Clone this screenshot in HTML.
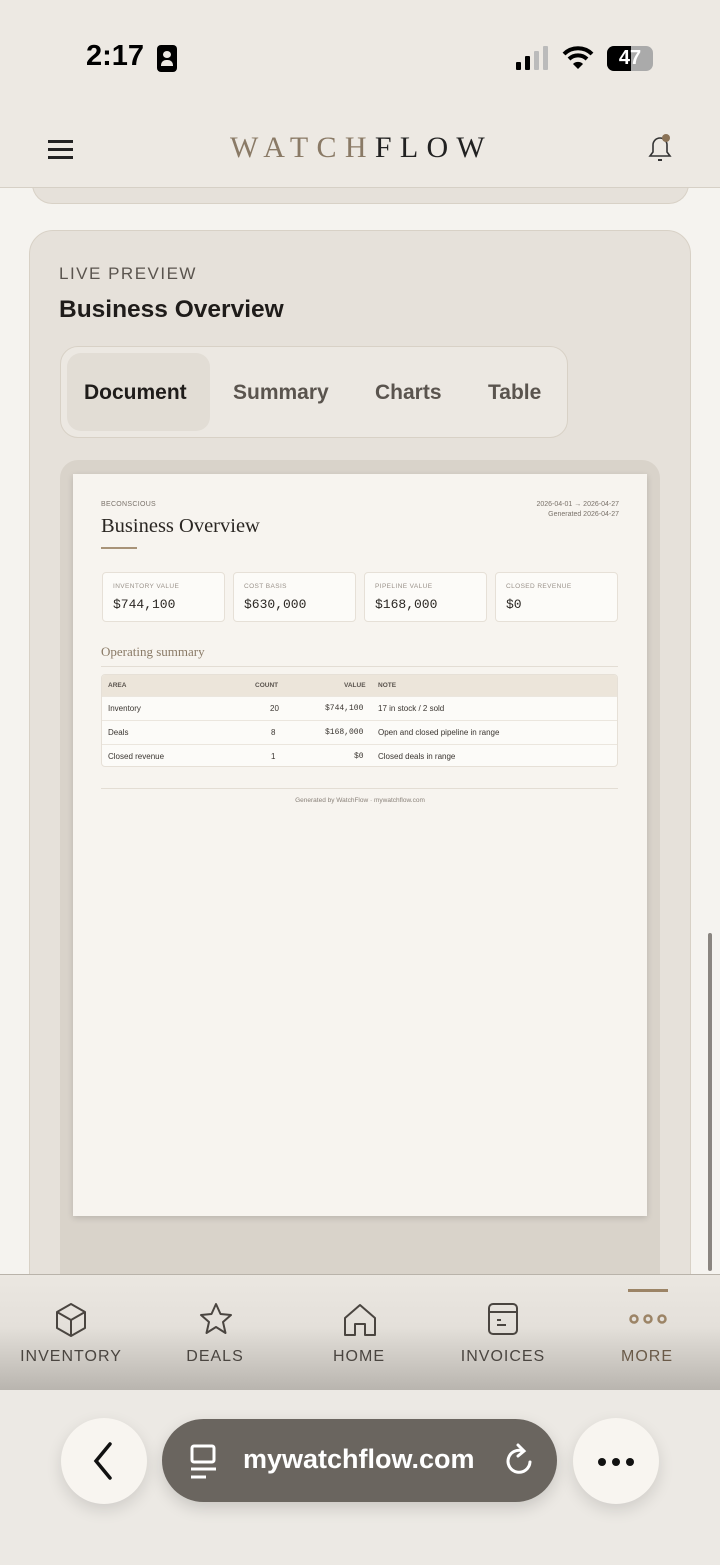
<!DOCTYPE html>
<html><head><meta charset="utf-8"><style>
*{box-sizing:border-box;margin:0;padding:0}
body{width:720px;height:1565px;overflow:hidden;background:#f5f3ef;font-family:"Liberation Sans",sans-serif;position:relative}
.abs{position:absolute}
.serif{font-family:"Liberation Serif",serif}
.mono{font-family:"Liberation Mono",monospace}
.kpi{position:absolute;top:572px;width:123px;height:50px;background:#fcfbf8;border:1px solid #e6e0d7;border-radius:4px}
.kpi .l{position:absolute;left:10px;top:10px;font-size:6.5px;color:#9a928a;letter-spacing:.4px}
.kpi .v{position:absolute;left:10px;top:24px;font-size:13px;color:#2a2622}
.row{position:absolute;left:0;width:515px;height:24px;border-top:1px solid #ebe6de;font-size:8px;color:#3a3530}
.row span{position:absolute;top:7px}
.nav{position:absolute;top:1348px;font-size:16px;color:#4a4540;letter-spacing:1px;text-align:center;width:120px}
</style></head><body>
<!-- top -->
<div class="abs" style="left:0;top:0;width:720px;height:188px;background:#ede9e3;border-bottom:1px solid #d6d0c6"></div>
<div class="abs" style="left:86px;top:40px;font-size:29px;font-weight:bold;color:#000">2:17</div>
<div class="abs" style="left:157px;top:45px;width:20px;height:27px;background:#000;border-radius:4px"><div style="position:absolute;left:6px;top:6px;width:8px;height:7px;background:#ede9e3;border-radius:50%"></div><div style="position:absolute;left:4px;top:15px;width:12px;height:6px;background:#ede9e3;border-radius:5px 5px 0 0"></div></div>
<div class="abs" style="left:516px;top:62px;width:5px;height:8px;background:#000;border-radius:1px"></div>
<div class="abs" style="left:525px;top:56px;width:5px;height:14px;background:#000;border-radius:1px"></div>
<div class="abs" style="left:534px;top:51px;width:5px;height:19px;background:#bbb;border-radius:1px"></div>
<div class="abs" style="left:543px;top:46px;width:5px;height:24px;background:#bbb;border-radius:1px"></div>
<svg class="abs" style="left:562px;top:45px" width="32" height="26" viewBox="0 0 32 26"><path d="M2 9a20 20 0 0 1 28 0" stroke="#000" stroke-width="4" fill="none"/><path d="M7 14a13 13 0 0 1 18 0" stroke="#000" stroke-width="4" fill="none"/><path d="M11 19l5 5 5-5a7 7 0 0 0-10 0z" fill="#000"/></svg>
<div class="abs" style="left:607px;top:46px;width:46px;height:25px;border-radius:7px;background:#aaa;overflow:hidden"><div style="width:24px;height:25px;background:#000"></div></div>
<div class="abs" style="left:607px;top:46px;width:46px;height:25px;text-align:center;font-size:20px;font-weight:bold;color:#fff;line-height:25px">47</div>
<div class="abs" style="left:48px;top:140px;width:25px;height:3px;background:#222;box-shadow:0 8px 0 #222,0 16px 0 #222"></div>
<div class="abs serif" style="left:230px;top:131px;font-size:30px;letter-spacing:8.3px;color:#8a7a66">WATCH<span style="color:#222">FLOW</span></div>
<svg class="abs" style="left:644px;top:132px" width="32" height="32" viewBox="0 0 32 32"><path d="M6 24h20l-3-4v-7a7 7 0 0 0-14 0v7z" stroke="#333" stroke-width="1.6" fill="none"/><path d="M14 28h4" stroke="#333" stroke-width="2"/><circle cx="22" cy="6" r="4" fill="#8a7256"/></svg>
<!-- prev card bottom -->
<div class="abs" style="left:32px;top:150px;width:657px;height:54px;background:#e6e1da;border:1px solid #d8d1c6;border-top:none;border-radius:0 0 20px 20px;z-index:-1"></div>
<!-- main card -->
<div class="abs" style="left:29px;top:230px;width:662px;height:1100px;background:#e6e1da;border:1.5px solid #d8d1c6;border-radius:24px"></div>
<div class="abs" style="left:59px;top:264px;font-size:17px;letter-spacing:1.5px;color:#5a544e">LIVE PREVIEW</div>
<div class="abs" style="left:59px;top:296px;font-size:24.5px;font-weight:bold;color:#1f1c1a">Business Overview</div>
<div class="abs" style="left:60px;top:346px;width:508px;height:92px;background:#ece8e2;border:1.5px solid #d8d1c6;border-radius:18px"></div>
<div class="abs" style="left:67px;top:353px;width:143px;height:78px;background:#e2ddd5;border-radius:14px"></div>
<div class="abs" style="left:84px;top:381px;font-size:21px;font-weight:bold;color:#1f1c1a">Document</div>
<div class="abs" style="left:233px;top:381px;font-size:21px;font-weight:bold;color:#5a544e">Summary</div>
<div class="abs" style="left:375px;top:381px;font-size:21px;font-weight:bold;color:#5a544e">Charts</div>
<div class="abs" style="left:488px;top:381px;font-size:21px;font-weight:bold;color:#5a544e">Table</div>
<!-- doc frame -->
<div class="abs" style="left:60px;top:460px;width:600px;height:830px;background:#d9d3ca;border-radius:18px 18px 0 0"></div>
<div class="abs" style="left:73px;top:474px;width:574px;height:742px;background:#f7f4ef;box-shadow:0 2px 6px rgba(0,0,0,.15)">
 <div class="abs" style="left:28px;top:27px;font-size:7px;color:#7a726a;letter-spacing:.3px">BECONSCIOUS</div>
 <div class="abs" style="right:28px;top:26px;font-size:7px;color:#7a726a;text-align:right;line-height:10px">2026-04-01 → 2026-04-27<br>Generated 2026-04-27</div>
 <div class="abs serif" style="left:28px;top:41px;font-size:20.5px;color:#2a2622">Business Overview</div>
 <div class="abs" style="left:28px;top:73px;width:36px;height:1.5px;background:#a89378"></div>
 <div class="abs serif" style="left:28px;top:170px;font-size:13px;color:#8a7a66">Operating summary</div>
 <div class="abs" style="left:28px;top:192px;width:517px;height:1px;background:#e3ddd4"></div>
 <div class="abs" style="left:28px;top:200px;width:517px;height:93px;background:#fcfbf8;border:1px solid #e6e0d7;border-radius:4px;overflow:hidden">
  <div style="position:absolute;left:0;top:0;width:517px;height:21px;background:#ece5da;font-size:6.5px;font-weight:bold;color:#5a544e">
   <span style="position:absolute;left:6px;top:7px">AREA</span><span style="position:absolute;left:153px;top:7px">COUNT</span><span style="position:absolute;left:242px;top:7px">VALUE</span><span style="position:absolute;left:276px;top:7px">NOTE</span></div>
  <div class="row" style="top:21px"><span style="left:6px">Inventory</span><span style="left:168px">20</span><span class="mono" style="left:223px">$744,100</span><span style="left:276px">17 in stock / 2 sold</span></div>
  <div class="row" style="top:45px"><span style="left:6px">Deals</span><span style="left:169px">8</span><span class="mono" style="left:223px">$168,000</span><span style="left:276px">Open and closed pipeline in range</span></div>
  <div class="row" style="top:69px"><span style="left:6px">Closed revenue</span><span style="left:169px">1</span><span class="mono" style="left:252px">$0</span><span style="left:276px">Closed deals in range</span></div>
 </div>
 <div class="abs" style="left:28px;top:314px;width:517px;height:1px;background:#e3ddd4"></div>
 <div class="abs" style="left:0;width:574px;top:323px;text-align:center;font-size:6.5px;color:#8a827a">Generated by WatchFlow · mywatchflow.com</div>
</div>
<div class="kpi" style="left:102px"><div class="l">INVENTORY VALUE</div><div class="v mono">$744,100</div></div>
<div class="kpi" style="left:233px"><div class="l">COST BASIS</div><div class="v mono">$630,000</div></div>
<div class="kpi" style="left:364px"><div class="l">PIPELINE VALUE</div><div class="v mono">$168,000</div></div>
<div class="kpi" style="left:495px"><div class="l">CLOSED REVENUE</div><div class="v mono">$0</div></div>
<div class="abs" style="left:708px;top:933px;width:4px;height:338px;background:#8a8580;border-radius:2px"></div>
<!-- bottom nav -->
<div class="abs" style="left:0;top:1274px;width:720px;height:116px;background:linear-gradient(#ebe7e1 0%,#e4e0da 45%,#b9b5af 100%);border-top:1px solid #b9b3aa"></div>
<div class="abs" style="left:628px;top:1289px;width:40px;height:3px;background:#9c8466"></div>
<svg class="abs" style="left:54px;top:1302px" width="34" height="36" viewBox="0 0 34 36" fill="none" stroke="#4a4540" stroke-width="2" stroke-linejoin="round"><path d="M17 2L31 10V26L17 34L3 26V10Z"/><path d="M3 10L17 18L31 10M17 18V34"/></svg>
<svg class="abs" style="left:198px;top:1302px" width="36" height="34" viewBox="0 0 36 34" fill="none" stroke="#4a4540" stroke-width="2" stroke-linejoin="round"><path d="M18 2l4.5 10 10.5 1-8 7 2.5 11-9.5-6-9.5 6 2.5-11-8-7 10.5-1z"/></svg>
<svg class="abs" style="left:342px;top:1302px" width="36" height="36" viewBox="0 0 36 36" fill="none" stroke="#4a4540" stroke-width="2" stroke-linejoin="round"><path d="M3 16L18 3L33 16V33H23V22H13V33H3Z"/></svg>
<svg class="abs" style="left:486px;top:1302px" width="34" height="34" viewBox="0 0 34 34" fill="none" stroke="#4a4540" stroke-width="2"><rect x="3" y="2" width="28" height="30" rx="4"/><path d="M3 10H31M11 18H15M11 23H20"/></svg>
<svg class="abs" style="left:628px;top:1313px" width="40" height="12" viewBox="0 0 40 12" fill="none" stroke="#9c8466" stroke-width="2.5"><circle cx="6" cy="6" r="3.5"/><circle cx="20" cy="6" r="3.5"/><circle cx="34" cy="6" r="3.5"/></svg>
<div class="nav" style="left:11px">INVENTORY</div>
<div class="nav" style="left:155px">DEALS</div>
<div class="nav" style="left:299px">HOME</div>
<div class="nav" style="left:443px">INVOICES</div>
<div class="nav" style="left:587px;color:#6a5a48">MORE</div>
<!-- browser bar -->
<div class="abs" style="left:0;top:1390px;width:720px;height:175px;background:#ece9e4"></div>
<div class="abs" style="left:61px;top:1418px;width:86px;height:86px;border-radius:50%;background:#f8f5f0;box-shadow:0 6px 16px rgba(0,0,0,.12)"></div>
<svg class="abs" style="left:88px;top:1440px" width="30" height="42" viewBox="0 0 30 42" fill="none" stroke="#111" stroke-width="3.5" stroke-linecap="round"><path d="M22 4L8 21L22 38"/></svg>
<div class="abs" style="left:162px;top:1419px;width:395px;height:83px;border-radius:42px;background:#6a655f;box-shadow:0 6px 16px rgba(0,0,0,.15)"></div>
<svg class="abs" style="left:188px;top:1444px" width="32" height="36" viewBox="0 0 32 36" fill="none" stroke="#fff" stroke-width="3"><rect x="4" y="2" width="22" height="16" rx="2"/><path d="M3 25H28M3 33H18"/></svg>
<div class="abs" style="left:243px;top:1444px;font-size:27px;font-weight:bold;color:#fff">mywatchflow.com</div>
<svg class="abs" style="left:502px;top:1442px" width="34" height="38" viewBox="0 0 34 38" fill="none" stroke="#fff" stroke-width="3" stroke-linecap="round"><path d="M21 9A11 11 0 1 0 28 20"/><path d="M16 3L22 9L16 14"/></svg>
<div class="abs" style="left:573px;top:1418px;width:86px;height:86px;border-radius:50%;background:#f8f5f0;box-shadow:0 6px 16px rgba(0,0,0,.12)"></div>
<div class="abs" style="left:598px;top:1458px;width:8px;height:8px;border-radius:50%;background:#111;box-shadow:14px 0 0 #111,28px 0 0 #111"></div>
</body></html>
